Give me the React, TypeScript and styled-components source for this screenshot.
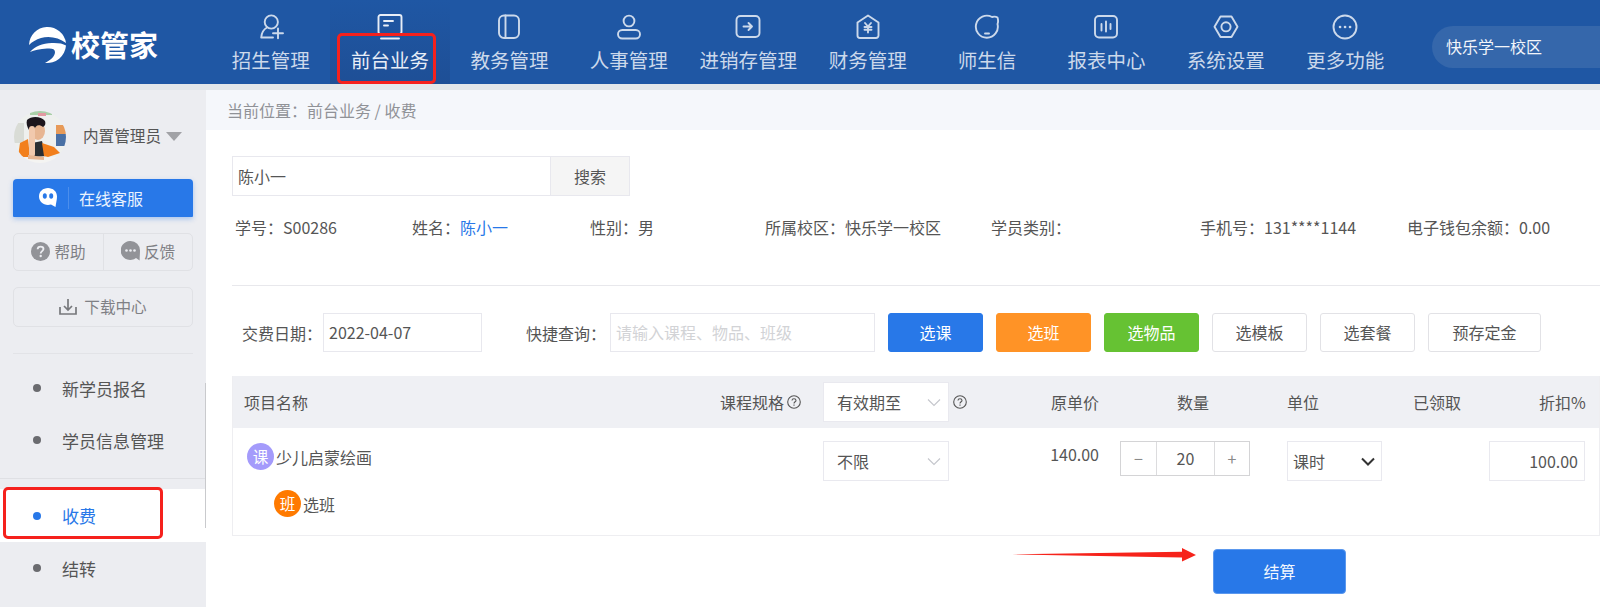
import React from 'react';
import styled, { createGlobalStyle } from 'styled-components';

const GlobalStyle = createGlobalStyle`
  html, body {
    margin: 0;
    padding: 0;
    height: 607px;
    overflow: hidden;
    background: #fff;
    font-family: "Noto Sans CJK SC", "Noto Sans", sans-serif;
    color: #555;
  }
  * { box-sizing: border-box; }
`;

const Page = styled.div`
  width: 1600px;
  height: 607px;
  display: flex;
  flex-direction: column;
  overflow: hidden;
`;

/* top bar */
const Header = styled.header`
  height: 84px;
  flex: none;
  display: flex;
  background: #1f57a4;
  overflow: hidden;
`;

const LogoBox = styled.div`
  width: 211px;
  flex: none;
  display: flex;
  align-items: center;
  padding: 4px 0 0 28px;
  gap: 4px;
`;

const LogoText = styled.span`
  font-size: 29px;
  line-height: 32px;
  font-weight: 700;
  color: #fff;
  white-space: nowrap;
`;

const Nav = styled.nav`
  display: grid;
  grid-template-columns: repeat(10, 119.4px);
  flex: none;
`;

const NavItem = styled.div<{ $active?: boolean }>`
  position: relative;
  display: flex;
  flex-direction: column;
  align-items: center;
  padding-top: 14px;
  gap: 6px;
  color: ${({ $active }) => ($active ? '#e8eef7' : '#ccd9eb')};
  background: ${({ $active }) =>
    $active ? 'linear-gradient(180deg, #1f57a4 0%, #1e4f96 100%)' : 'transparent'};
`;

const NavIcon = styled.svg`
  width: 26px;
  height: 26px;
  fill: none;
  stroke: currentColor;
  stroke-width: 1.9;
  stroke-linecap: round;
  stroke-linejoin: round;
`;

const NavLabel = styled.span`
  font-size: 19.5px;
  line-height: 28px;
  white-space: nowrap;
`;

const NavMark = styled.div`
  position: absolute;
  left: 7px;
  top: 33px;
  width: 99px;
  height: 51px;
  border: 3px solid #f5211d;
  border-radius: 5px;
`;

const CampusPill = styled.div`
  margin: 26px 0 0 27px;
  height: 42px;
  width: 240px;
  flex: none;
  border-radius: 21px;
  background: #3567ab;
  color: #f2f5fa;
  font-size: 16px;
  line-height: 40px;
  padding-left: 14px;
`;

const Strip = styled.div`
  height: 6px;
  flex: none;
  background: #e3e7ea;
`;

const Body = styled.div`
  flex: 1;
  display: flex;
  min-height: 0;
`;

/* left column */
const Sidebar = styled.aside`
  position: relative;
  width: 206px;
  flex: none;
  background: #ecedf1;
  padding-top: 21px;
`;

const ScrollLine = styled.div`
  position: absolute;
  right: 0;
  top: 293px;
  width: 1px;
  height: 145px;
  background: #c9cacd;
`;

const UserRow = styled.div`
  display: flex;
  align-items: center;
  padding-left: 14px;
  height: 52px;
`;

const UserName = styled.span`
  margin: 0 0 4px 17px;
  font-size: 15.6px;
  white-space: nowrap;
  color: #555;
`;

const Caret = styled.i`
  margin-left: 5px;
  margin-bottom: 2px;
  border-style: solid;
  border-width: 9px 8px 0;
  border-color: #a1a2a6 transparent transparent;
`;

const SideGroup = styled.div`
  padding: 0 13px;
`;

const ServiceButton = styled.div`
  margin-top: 16px;
  height: 38px;
  display: flex;
  align-items: center;
  background: #2878e8;
  border-radius: 4px 4px 1px 1px;
  box-shadow: 0 2px 5px rgba(40, 120, 232, 0.35);
  color: #e9f2fe;
  font-size: 16px;
  padding-left: 25px;
`;

const ServiceSep = styled.i`
  width: 1px;
  height: 22px;
  background: #4b8eec;
  margin: 0 10px;
`;

const HelpRow = styled.div`
  margin-top: 16px;
  height: 38px;
  display: grid;
  grid-template-columns: 89px 89px;
  border: 1px solid #e0e1e5;
  border-radius: 5px;
`;

const HelpCell = styled.div<{ $divided?: boolean }>`
  display: flex;
  align-items: center;
  justify-content: center;
  gap: 4px;
  font-size: 15.6px;
  padding-bottom: 2px;
  color: #7f8085;
  border-left: ${({ $divided }) => ($divided ? '1px solid #e0e1e5' : 'none')};
`;

const DownloadButton = styled.div`
  margin-top: 16px;
  height: 40px;
  display: flex;
  align-items: center;
  justify-content: center;
  gap: 7px;
  padding-bottom: 2px;
  border: 1px solid #e0e1e5;
  border-radius: 5px;
  font-size: 15.6px;
  color: #7f8085;
`;

const SideRule = styled.div`
  margin-top: 26px;
  height: 1px;
  background: #e2e3e7;
`;

const Menu = styled.ul`
  list-style: none;
  margin: 8px 0 0;
  padding: 0;
`;

const MenuItem = styled.li<{ $active?: boolean }>`
  position: relative;
  height: ${({ $active }) => ($active ? '53px' : '52px')};
  display: flex;
  align-items: center;
  padding-left: 33px;
  font-size: 17px;
  color: ${({ $active }) => ($active ? '#2878e8' : '#555')};
  background: ${({ $active }) => ($active ? '#fff' : 'transparent')};
  &::before {
    content: '';
    width: 8px;
    height: 8px;
    border-radius: 50%;
    margin-right: 21px;
    background: ${({ $active }) => ($active ? '#2878e8' : '#6a6b6f')};
  }
`;

const MenuRule = styled.li`
  height: 1px;
  margin: 12px 0 10px;
  background: #dfe0e4;
`;

const MenuMark = styled.div`
  position: absolute;
  left: 3px;
  top: -2px;
  width: 160px;
  height: 52px;
  border: 3px solid #f5211d;
  border-radius: 5px;
`;

/* main area */
const Main = styled.main`
  flex: 1;
  min-width: 0;
  display: flex;
  flex-direction: column;
`;

const Crumb = styled.div`
  height: 40px;
  flex: none;
  background: #f5f7fb;
  padding-left: 21px;
  font-size: 16px;
  line-height: 40px;
  color: #909297;
`;

const Content = styled.div`
  padding: 26px 0 0 26px;
  width: 1394px;
`;

const SearchBox = styled.div`
  display: flex;
  width: 398px;
  height: 40px;
  border: 1px solid #e8e8ee;
`;

const SearchValue = styled.div`
  flex: 1;
  font-size: 16px;
  line-height: 38px;
  padding-left: 5px;
  color: #555;
`;

const SearchButton = styled.div`
  width: 79px;
  text-align: center;
  background: #f5f5f5;
  border-left: 1px solid #e8e8ee;
  font-size: 16px;
  line-height: 38px;
  color: #555;
`;

const InfoRow = styled.div`
  display: grid;
  grid-template-columns: 177px 178px 175px 226px 209px 207px auto;
  margin-top: 15px;
  padding-left: 3px;
  height: 32px;
  font-size: 16px;
  line-height: 32px;
  color: #555;
  white-space: nowrap;
`;

const NameLink = styled.span`
  color: #2878e8;
`;

const Rule = styled.div`
  margin-top: 42px;
  height: 1px;
  background: #e8e8ec;
`;

const QueryRow = styled.div`
  display: flex;
  align-items: center;
  margin-top: 27px;
  padding-left: 10px;
  height: 39px;
`;

const QueryLabel = styled.span<{ $left?: number; $width: number }>`
  margin-left: ${({ $left }) => $left ?? 0}px;
  width: ${({ $width }) => $width}px;
  flex: none;
  font-size: 16px;
  color: #555;
  white-space: nowrap;
`;

const QueryInput = styled.div<{ $width: number; $muted?: boolean }>`
  width: ${({ $width }) => $width}px;
  height: 39px;
  flex: none;
  border: 1px solid #e8e8ee;
  font-size: 16px;
  line-height: 37px;
  padding-left: 5px;
  color: ${({ $muted }) => ($muted ? '#d2d3d6' : '#555')};
`;

const ButtonGroup = styled.div`
  display: flex;
  gap: 13px;
  margin-left: 13px;
`;

const ActionButton = styled.div<{ $color?: string; $width?: number }>`
  width: ${({ $width }) => $width ?? 95}px;
  height: 39px;
  text-align: center;
  font-size: 16px;
  line-height: 37px;
  border-radius: 3px;
  border: 1px solid ${({ $color }) => $color ?? '#e2e2e6'};
  background: ${({ $color }) => $color ?? '#fff'};
  color: ${({ $color }) => ($color ? '#fff' : '#555')};
`;

const tableColumns = '487px 103px 144px 132px 188px 126px 76px 96px auto';

const Table = styled.div`
  margin-top: 24px;
  border: 1px solid #eeeef1;
  border-top: 0;
`;

const TableHead = styled.div`
  display: grid;
  grid-template-columns: ${tableColumns};
  align-items: center;
  height: 52px;
  background: #eff0f4;
  font-size: 16px;
  color: #555;
`;

const HeadCell = styled.div<{ $pad?: number; $right?: boolean; $gap?: number }>`
  display: flex;
  align-items: center;
  justify-content: ${({ $right }) => ($right ? 'flex-end' : 'flex-start')};
  gap: ${({ $gap }) => $gap ?? 0}px;
  padding-left: ${({ $pad }) => $pad ?? 0}px;
  white-space: nowrap;
`;

const TableBody = styled.div`
  display: grid;
  grid-template-columns: ${tableColumns};
  align-items: start;
  height: 107px;
  padding-top: 13px;
  font-size: 16px;
  color: #555;
`;

const ItemCell = styled.div`
  display: flex;
  flex-direction: column;
  padding: 2px 0 0 14px;
  gap: 20px;
`;

const ItemLine = styled.div<{ $indent?: number }>`
  display: flex;
  align-items: center;
  gap: 2px;
  height: 27px;
  padding-left: ${({ $indent }) => $indent ?? 0}px;
`;

const Badge = styled.span<{ $color: string }>`
  width: 27px;
  height: 27px;
  border-radius: 50%;
  background: ${({ $color }) => $color};
  color: #fff;
  font-size: 15.6px;
  line-height: 27px;
  text-align: center;
`;

const SelectBox = styled.div`
  width: 126px;
  height: 40px;
  display: flex;
  align-items: center;
  justify-content: space-between;
  padding: 0 7px 0 13px;
  background: #fff;
  border: 1px solid #e9e9ef;
  font-size: 16px;
  color: #555;
`;

const Price = styled.div`
  text-align: right;
  line-height: 26px;
`;

const Stepper = styled.div`
  margin-left: 21px;
  width: 130px;
  height: 35px;
  display: grid;
  grid-template-columns: 35px 1fr 34px;
  border: 1px solid #d4d4d6;
  line-height: 32px;
  text-align: center;
`;

const StepCell = styled.span<{ $mid?: boolean }>`
  color: ${({ $mid }) => ($mid ? '#555' : '#8a8a8a')};
  border-left: ${({ $mid }) => ($mid ? '1px solid #dcdcde' : 'none')};
  border-right: ${({ $mid }) => ($mid ? '1px solid #dcdcde' : 'none')};
`;

const UnitSelect = styled(SelectBox)`
  width: 95px;
  padding: 0 6px 0 5px;
`;

const DiscountInput = styled.div`
  grid-column: 8;
  width: 96px;
  height: 40px;
  border: 1px solid #e9e9ef;
  text-align: right;
  padding-right: 6px;
  line-height: 38px;
`;

const SettleRow = styled.div`
  display: flex;
  align-items: flex-start;
  padding-left: 780px;
  margin-top: 11px;
  gap: 17px;
`;

const SettleButton = styled.div`
  margin-top: 2px;
  width: 133px;
  height: 45px;
  background: #2878e8;
  border: 1px solid #5b98ee;
  border-radius: 4px;
  color: #f2f7fe;
  font-size: 16px;
  line-height: 43px;
  text-align: center;
`;

const navItems = [
  {
    label: '招生管理',
    icon: (
      <>
        <circle cx="13.3" cy="8" r="6.6" />
        <path d="M9 13.5 C5.5 15.5 3.5 19.5 3.2 23.5 H15" />
        <path d="M15 19.3 H25 M20 14.5 V24.2" />
      </>
    ),
  },
  {
    label: '前台业务',
    icon: (
      <>
        <rect x="1.5" y="1" width="23" height="19" rx="2" />
        <path d="M7 7 H16 M7 11.5 H11 M4 24.5 H22" />
      </>
    ),
  },
  {
    label: '教务管理',
    icon: (
      <>
        <rect x="3" y="1.5" width="20" height="22.5" rx="5" />
        <path d="M9.5 1.5 V24" />
      </>
    ),
  },
  {
    label: '人事管理',
    icon: (
      <>
        <circle cx="13" cy="7" r="5.4" />
        <rect x="2" y="16" width="22" height="8.5" rx="4.2" />
      </>
    ),
  },
  {
    label: '进销存管理',
    icon: (
      <>
        <rect x="1.5" y="2" width="23" height="21" rx="4" />
        <path d="M8.5 12.5 H17 M13.5 9 L17 12.5 L13.5 16" />
      </>
    ),
  },
  {
    label: '财务管理',
    icon: (
      <>
        <path d="M13 1.5 L23.5 8.5 V21.5 A2.5 2.5 0 0 1 21 24 H5 A2.5 2.5 0 0 1 2.5 21.5 V8.5 Z" />
        <path d="M10 9 L13 12.5 L16 9 M9.5 13 H16.5 M9.5 15.8 H16.5 M13 12.5 V18.5" />
      </>
    ),
  },
  {
    label: '师生信',
    icon: (
      <>
        <path d="M18 3 A11 11 0 1 0 23.5 10 C24.5 7.5 24 5 23.5 3.5 C22 2.5 20 2.5 18 3 Z" />
        <path d="M11 19.5 H15" />
      </>
    ),
  },
  {
    label: '报表中心',
    icon: (
      <>
        <rect x="2" y="2" width="22" height="21.5" rx="4" />
        <path d="M8.5 10 V16.5 M13 7.5 V17.5 M17.5 10 V15" />
      </>
    ),
  },
  {
    label: '系统设置',
    icon: (
      <>
        <path d="M7.5 2.5 H18.5 L24.5 12.8 L18.5 23 H7.5 L1.5 12.8 Z" />
        <circle cx="13" cy="12.8" r="4.6" />
      </>
    ),
  },
  {
    label: '更多功能',
    icon: (
      <>
        <circle cx="13" cy="13" r="11.5" />
        <path d="M8 13 H8.1 M13 13 H13.1 M18 13 H18.1" strokeWidth="2.6" />
      </>
    ),
  },
];

const infoItems: React.ReactNode[] = [
  '学号：S00286',
  <>
    姓名：<NameLink>陈小一</NameLink>
  </>,
  '性别：男',
  '所属校区：快乐学一校区',
  '学员类别：',
  '手机号：131****1144',
  '电子钱包余额：0.00',
];

const Logo = () => (
  <svg width="39" height="39" viewBox="0 0 39 39" fill="#fff">
    <path d="M1 20 A18.6 18.6 0 0 1 38 18 C31 12.5 21 10.5 13 13 C8 14.5 4 17 1 20 Z" />
    <path d="M2 27 C7 21 14 18.5 24 18 C30 17.8 35 18.5 38 20.5 A19 19 0 0 1 17 38 C23 35 27 31 27 27 C27 24 24 23 19 23.5 C12 24 6 25 2 27 Z" />
  </svg>
);

const Avatar = () => (
  <svg width="52" height="52" viewBox="0 0 52 52">
    <defs>
      <clipPath id="avatar-clip">
        <circle cx="26" cy="26" r="26" />
      </clipPath>
      <filter id="avatar-soft">
        <feGaussianBlur stdDeviation="0.6" />
      </filter>
    </defs>
    <g clipPath="url(#avatar-clip)">
      <g filter="url(#avatar-soft)">
        <rect width="52" height="52" fill="#eef0ee" />
        <rect x="16" y="0" width="22" height="4" fill="#a9cfa8" />
        <rect x="24" y="2" width="8" height="3" fill="#e29aa2" />
        <rect x="0" y="12" width="10" height="20" fill="#d9dcd6" />
        <rect x="42" y="14" width="10" height="9" fill="#e79a58" />
        <rect x="42" y="23" width="10" height="12" fill="#4a6fa5" />
        <path d="M4 46 L6 32 L14 28 L16 46 Z" fill="#f27f1c" />
        <path d="M18 32 L28 30 L32 45 L20 46 Z" fill="#2b2d33" />
        <path d="M28 32 L40 36 L46 42 L34 46 L30 45 Z" fill="#f27f1c" />
        <ellipse cx="24" cy="20" rx="7" ry="9" fill="#e7b692" />
        <path d="M13 9 C17 5 27 5 31 10 C32 13 31 15 29 16 C25 13 21 14 20 20 L15 19 C13 16 12 12 13 9 Z" fill="#1a191d" />
        <rect x="15" y="15" width="6" height="31" rx="3" fill="#f1c9ad" />
        <rect x="0" y="46" width="52" height="6" fill="#f4f4f2" />
        <path d="M14 44 L30 46 L30 49 L14 48 Z" fill="#e7b692" />
      </g>
    </g>
  </svg>
);

const ChatIcon = () => (
  <svg width="20" height="22" viewBox="0 0 20 22">
    <path d="M10 1 C15 1 19 4.5 19 9.5 C19 13 18 16 17.5 20 L13 17.6 C12 18 11 18 10 18 C5 18 1 14 1 9.5 C1 4.5 5 1 10 1 Z" fill="#fff" />
    <ellipse cx="6.8" cy="9" rx="2" ry="2.8" fill="#2878e8" />
    <ellipse cx="13.2" cy="9" rx="2" ry="2.8" fill="#2878e8" />
  </svg>
);

const HelpFilled = () => (
  <svg width="19" height="19" viewBox="0 0 19 19">
    <circle cx="9.5" cy="9.5" r="9.5" fill="#929398" />
    <path d="M6.6 7.3 C6.7 5.6 8 4.7 9.6 4.7 C11.3 4.7 12.5 5.7 12.5 7.1 C12.5 9 9.7 9.3 9.7 11.4" fill="none" stroke="#ecedf1" strokeWidth="1.8" />
    <circle cx="9.7" cy="14" r="1.2" fill="#ecedf1" />
  </svg>
);

const FeedbackFilled = () => (
  <svg width="19" height="20" viewBox="0 0 19 20">
    <path d="M9.5 0 A9.5 9.5 0 0 1 19 9.5 C19 13 18.6 16.5 18.6 19.5 L15 17 A9.5 9.5 0 1 1 9.5 0 Z" fill="#929398" />
    <circle cx="5.5" cy="9.5" r="1.3" fill="#ecedf1" />
    <circle cx="9.5" cy="9.5" r="1.3" fill="#ecedf1" />
    <circle cx="13.5" cy="9.5" r="1.3" fill="#ecedf1" />
  </svg>
);

const DownloadIcon = () => (
  <svg width="18" height="17" viewBox="0 0 18 17" fill="none" stroke="#77787c" strokeWidth="1.7">
    <path d="M1 9 V16 H17 V9" />
    <path d="M9 1 V11.5 M5 8 L9 12 L13 8" />
  </svg>
);

const QuestionIcon = () => (
  <svg width="14" height="14" viewBox="0 0 14 14" fill="none" stroke="#555" strokeWidth="1.1">
    <circle cx="7" cy="7" r="6.3" />
    <path d="M5 5.5 C5 4.3 5.9 3.7 7 3.7 C8.1 3.7 9 4.4 9 5.4 C9 6.7 7 6.8 7 8.4" />
    <path d="M7 9.6 V10.7" />
  </svg>
);

const Chevron = ({ dark }: { dark?: boolean }) => (
  <svg width="14" height="9" viewBox="0 0 14 9" fill="none" stroke={dark ? '#333' : '#c4c6cc'} strokeWidth={dark ? 2 : 1.1}>
    <path d="M1 1.5 L7 7.5 L13 1.5" />
  </svg>
);

const Arrow = () => (
  <svg width="184" height="16" viewBox="0 0 184 16">
    <polygon points="0,7.4 170,4.8 170,1 184,8 170,14.5 170,10.5" fill="#f6231b" />
  </svg>
);

const App: React.FC = () => (
  <Page>
    <GlobalStyle />
    <Header>
      <LogoBox>
        <Logo />
        <LogoText>校管家</LogoText>
      </LogoBox>
      <Nav>
        {navItems.map((item) => {
          const active = item.label === '前台业务';
          return (
            <NavItem key={item.label} $active={active}>
              <NavIcon viewBox="0 0 26 26">{item.icon}</NavIcon>
              <NavLabel>{item.label}</NavLabel>
              {active && <NavMark />}
            </NavItem>
          );
        })}
      </Nav>
      <CampusPill>快乐学一校区</CampusPill>
    </Header>
    <Strip />
    <Body>
      <Sidebar>
        <UserRow>
          <Avatar />
          <UserName>内置管理员</UserName>
          <Caret />
        </UserRow>
        <SideGroup>
          <ServiceButton>
            <ChatIcon />
            <ServiceSep />
            在线客服
          </ServiceButton>
          <HelpRow>
            <HelpCell>
              <HelpFilled />
              帮助
            </HelpCell>
            <HelpCell $divided>
              <FeedbackFilled />
              反馈
            </HelpCell>
          </HelpRow>
          <DownloadButton>
            <DownloadIcon />
            下载中心
          </DownloadButton>
          <SideRule />
        </SideGroup>
        <Menu>
          <MenuItem>新学员报名</MenuItem>
          <MenuItem>学员信息管理</MenuItem>
          <MenuRule />
          <MenuItem $active>
            收费
            <MenuMark />
          </MenuItem>
          <MenuItem>结转</MenuItem>
        </Menu>
        <ScrollLine />
      </Sidebar>
      <Main>
        <Crumb>当前位置：前台业务 / 收费</Crumb>
        <Content>
          <SearchBox>
            <SearchValue>陈小一</SearchValue>
            <SearchButton>搜索</SearchButton>
          </SearchBox>
          <InfoRow>
            {infoItems.map((info, i) => (
              <span key={i}>{info}</span>
            ))}
          </InfoRow>
          <Rule />
          <QueryRow>
            <QueryLabel $width={81}>交费日期：</QueryLabel>
            <QueryInput $width={159}>2022-04-07</QueryInput>
            <QueryLabel $left={44} $width={84}>
              快捷查询：
            </QueryLabel>
            <QueryInput $width={265} $muted>
              请输入课程、物品、班级
            </QueryInput>
            <ButtonGroup>
              <ActionButton $color="#2878e8">选课</ActionButton>
              <ActionButton $color="#ff9326">选班</ActionButton>
              <ActionButton $color="#66c233">选物品</ActionButton>
              <ActionButton>选模板</ActionButton>
              <ActionButton>选套餐</ActionButton>
              <ActionButton $width={113}>预存定金</ActionButton>
            </ButtonGroup>
          </QueryRow>
          <Table>
            <TableHead>
              <HeadCell $pad={11}>项目名称</HeadCell>
              <HeadCell $gap={3}>
                课程规格
                <QuestionIcon />
              </HeadCell>
              <HeadCell $gap={4}>
                <SelectBox>
                  有效期至
                  <Chevron />
                </SelectBox>
                <QuestionIcon />
              </HeadCell>
              <HeadCell $right>原单价</HeadCell>
              <HeadCell $pad={78}>数量</HeadCell>
              <HeadCell>单位</HeadCell>
              <HeadCell>已领取</HeadCell>
              <HeadCell $pad={50}>折扣%</HeadCell>
            </TableHead>
            <TableBody>
              <ItemCell>
                <ItemLine>
                  <Badge $color="#a49bfb">课</Badge>
                  少儿启蒙绘画
                </ItemLine>
                <ItemLine $indent={27}>
                  <Badge $color="#ff7a00">班</Badge>
                  选班
                </ItemLine>
              </ItemCell>
              <div />
              <SelectBox>
                不限
                <Chevron />
              </SelectBox>
              <Price>140.00</Price>
              <Stepper>
                <StepCell>−</StepCell>
                <StepCell $mid>20</StepCell>
                <StepCell>+</StepCell>
              </Stepper>
              <UnitSelect>
                课时
                <Chevron dark />
              </UnitSelect>
              <DiscountInput>100.00</DiscountInput>
            </TableBody>
          </Table>
          <SettleRow>
            <Arrow />
            <SettleButton>结算</SettleButton>
          </SettleRow>
        </Content>
      </Main>
    </Body>
  </Page>
);

export default App;
